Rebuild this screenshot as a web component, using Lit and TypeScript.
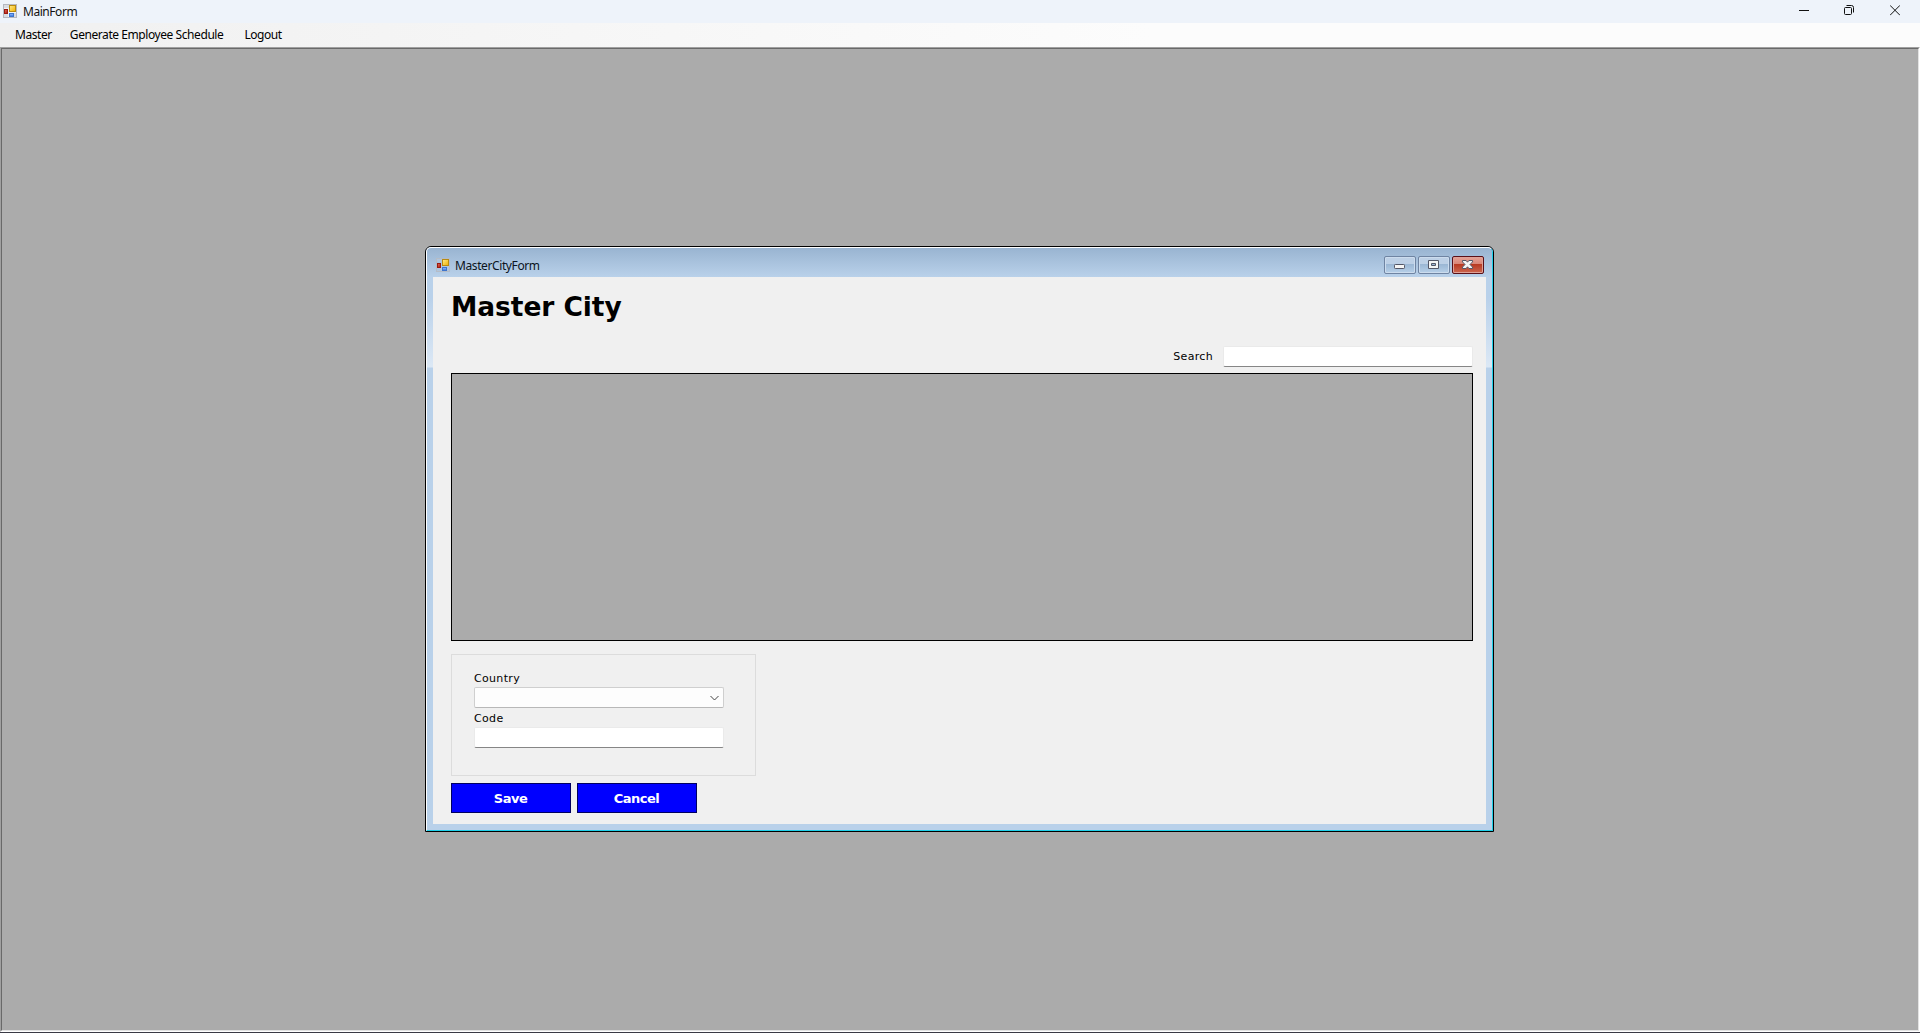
import { LitElement, html, css, svg } from "lit";
import { customElement } from "lit/decorators.js";

const formIcon = html`<svg class="form-icon" viewBox="0 0 14 14" width="14" height="14" shape-rendering="crispEdges">
  <defs>
    <linearGradient id="gold" x2="1" y2="1"><stop stop-color="#ffeb8a"/><stop offset="1" stop-color="#f0b000"/></linearGradient>
    <linearGradient id="red" x2="1" y2="1"><stop stop-color="#e87060"/><stop offset="1" stop-color="#a81408"/></linearGradient>
    <linearGradient id="blue" x2="0" y2="1"><stop stop-color="#9cc4ff"/><stop offset="1" stop-color="#2f6fe0"/></linearGradient>
  </defs>
  <path class="outline" fill="none" d="M.5 .5h13v13H.5z"/>
  <path class="fill" d="M1 1h5v3H1zM1 10h4v3H1zM11 9h2v4h-2z"/>
  <rect x="6.5" y="1.5" width="6" height="6" fill="url(#gold)" stroke="#b88a10"/>
  <rect x="1.5" y="5.5" width="3" height="4" fill="url(#red)" stroke="#9a1a10"/>
  <rect x="6.5" y="9.5" width="4" height="3" fill="url(#blue)" stroke="#3e74cc"/>
</svg>`;

const glyphs = {
  min: svg`<rect x="9.5" y="7.5" width="10" height="4" rx=".8"/>`,
  max: svg`<path fill-rule="evenodd" d="M9.5 3.5h10v8h-10zM12.5 6.5h4v2h-4z"/>`,
  close: svg`<path d="M9.5 3.5h3.6l1.4 1.7 1.4-1.7h3.6v1.4l-2.5 2.6 2.5 2.6v1.4h-3.6l-1.4-1.7-1.4 1.7H9.5v-1.4L12 7.5 9.5 4.9z"/>`,
};

@customElement("city-form")
class CityForm extends LitElement {
  static styles = css`
    :host { display: block; box-sizing: border-box; font-family: "DejaVu Sans", Verdana, sans-serif; font-size: 11px; color: #000; }
    .window { box-sizing: border-box; width: 1069px; height: 586px; border: 1px solid #000; border-radius: 6px 6px 0 0; overflow: hidden; background: #b9d1ea; }
    .frame { box-sizing: border-box; height: 584px; border: 1px solid #fff; border-right-color: #1fd0ea; border-bottom-color: #1fd0ea; border-radius: 5px 5px 0 0; padding: 0 6px 6px; display: flex; flex-direction: column;
      background: linear-gradient(#99b4d1 0, #b9d1ea 29px, #b9d1ea 50px, #dce8f5 119px, #b9d1ea 120px); }
    .title { height: 29px; flex: none; display: flex; align-items: flex-start; }
    .form-icon { margin: 10px 0 0 3px; }
    .form-icon .outline { stroke: #b5bcc6; }
    .form-icon .fill { fill: #b0c5dd; }
    .caption { flex: 1; margin: 9px 0 0 5px; font: 12px/17px "Noto Sans", "Open Sans", sans-serif; letter-spacing: -.4px; color: #0b1420; }
    .controls { display: flex; gap: 2px; margin: 8px 2px 0 0; }
    .control { box-sizing: border-box; width: 32px; height: 18px; border: 1px solid #6f84a2; border-radius: 2px; box-shadow: inset 0 0 0 1px #ccdcee; background: linear-gradient(#bdd0e6 0 45%, #9bb7d4 46%, #b7d0e9); }
    .control svg { display: block; fill: #f5f5f5; stroke: #535666; }
    .close { border-color: #5a1018; box-shadow: inset 0 0 0 1px #dfa197; background: linear-gradient(#e5a297 0, #d98475 45%, #b83a22 46%, #cc6650); }
    .client { flex: 1; box-sizing: border-box; background: #f0f0f0; padding: 15px 13px 0 18px; }
    h1 { margin: 0; height: 54px; font: bold 26.5px/30px "DejaVu Sans", Verdana, sans-serif; letter-spacing: -.07px; }
    .search { display: flex; justify-content: flex-end; align-items: center; gap: 10px; height: 21px; margin: 0 0 6px 0; }
    .search span, .panel label { letter-spacing: .33px; }
    .field { box-sizing: border-box; width: 250px; height: 21px; background: #fff; border: 1px solid #eaeaea; border-bottom-color: #868686; border-radius: 2px; }
    .grid { box-sizing: border-box; height: 268px; border: 1px solid #000; background: #ababab; }
    .panel { box-sizing: border-box; width: 305px; height: 122px; margin-top: 13px; border: 1px solid #dcdcdc; padding: 15px 0 0 22px; }
    .panel label { display: block; height: 17px; line-height: 17px; }
    .panel .code { height: 19px; line-height: 21px; }
    .combo { box-sizing: border-box; width: 250px; height: 21px; display: flex; align-items: center; justify-content: flex-end; padding-right: 4px; background: #fdfdfd; border: 1px solid #cfcfcf; border-bottom-color: #b8b8b8; border-radius: 2px; }
    .actions { display: flex; gap: 6px; margin-top: 7px; }
    button { box-sizing: border-box; width: 120px; height: 30px; padding: 1px 1px 0 0; background: #00f; color: #fff; border: 1px solid #000060; border-radius: 0; font: bold 13px/27px "DejaVu Sans", Verdana, sans-serif; letter-spacing: -.5px; }
  `;
  render() {
    return html`<div class="window"><div class="frame">
      <div class="title">${formIcon}<span class="caption">MasterCityForm</span>
        <div class="controls">
          <div class="control"><svg width="30" height="16">${glyphs.min}</svg></div>
          <div class="control"><svg width="30" height="16">${glyphs.max}</svg></div>
          <div class="control close"><svg width="30" height="16">${glyphs.close}</svg></div>
        </div>
      </div>
      <div class="client">
        <h1>Master City</h1>
        <div class="search"><span>Search</span><div class="field"></div></div>
        <div class="grid"></div>
        <div class="panel">
          <label>Country</label>
          <div class="combo"><svg width="9" height="6" fill="none" stroke="#444"><path d="M.5 1 4.5 5 8.5 1"/></svg></div>
          <label class="code">Code</label>
          <div class="field"></div>
        </div>
        <div class="actions"><button>Save</button><button>Cancel</button></div>
      </div>
    </div></div>`;
  }
}

@customElement("app-root")
class AppRoot extends LitElement {
  static styles = css`
    :host { display: flex; flex-direction: column; width: 1920px; height: 1033px; overflow: hidden; font: 12px/16px "Noto Sans", "Open Sans", sans-serif; color: #000; }
    .titlebar { height: 23px; flex: none; display: flex; background: #eef3fa; }
    .form-icon { margin: 4px 0 0 3px; }
    .form-icon .outline { stroke: #b5b8c0; }
    .form-icon .fill { fill: #d9dce2; }
    .name { flex: 1; margin: 4px 0 0 6px; letter-spacing: -.45px; color: #111; }
    .controls { display: flex; gap: 35px; margin: 5px 20px 0 0; }
    .controls svg:last-child { margin-left: 1px; }
    .menu { height: 24px; flex: none; display: flex; gap: 18px; padding-left: 15px; background: linear-gradient(90deg, #f0f0f0, #fcfcfc 60%); line-height: 24px; }
    .menu span { white-space: nowrap; letter-spacing: -.43px; }
    .menu span:last-child { margin-left: 3px; }
    .desk { flex: 1; box-sizing: border-box; position: relative; background: #ababab; border: 1px solid; border-color: #a0a0a0 #fff #fff #a0a0a0; }
    .well { box-sizing: border-box; height: 100%; border: 1px solid; border-color: #696969 #e3e3e3 #e3e3e3 #696969; }
    city-form { position: absolute; left: 424px; top: 198px; }
    .edge { flex: none; height: 1px; background: #3a3a45; }
  `;
  render() {
    return html`
      <div class="titlebar">${formIcon}<span class="name">MainForm</span>
        <div class="controls">
          <svg width="10" height="11" stroke="#111" fill="none"><path d="M0 5.5h10"/></svg>
          <svg width="10" height="11" stroke="#111" fill="none"><rect x=".5" y="2.5" width="7" height="7" rx="1"/><path d="M2.5 .5h5a2 2 0 0 1 2 2v5"/></svg>
          <svg width="10" height="11" stroke="#111" fill="none"><path d="M0 .3 10 10.3M10 .3 0 10.3"/></svg>
        </div>
      </div>
      <div class="menu"><span>Master</span><span>Generate Employee Schedule</span><span>Logout</span></div>
      <div class="desk"><div class="well"></div><city-form></city-form></div>
      <div class="edge"></div>`;
  }
}
